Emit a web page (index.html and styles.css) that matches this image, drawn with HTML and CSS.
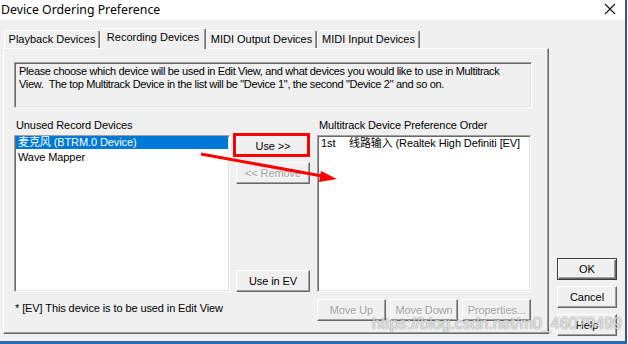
FILE: index.html
```html
<!DOCTYPE html>
<html lang="en">
<head>
  <meta charset="UTF-8">
  <title>Device Ordering Preference</title>
  <link rel="stylesheet" href="styles.css">
</head>
<body>
<div class="window">
  <header class="titlebar">
    <span class="title">Device Ordering Preference</span>
    <svg class="close" width="12" height="12" viewBox="0 0 12 12">
      <path d="M1 1 L11 11 M11 1 L1 11" stroke="#111" stroke-width="1.1" fill="none"/>
    </svg>
  </header>
  <div class="client">
    <div class="sheet">
      <nav class="tabs">
        <div class="tab tab-playback">Playback Devices</div>
        <div class="tab tab-recording active">Recording Devices</div>
        <div class="tab tab-midi-out">MIDI Output Devices</div>
        <div class="tab tab-midi-in">MIDI Input Devices</div>
      </nav>
      <section class="panel">
        <p class="info">Please choose which device will be used in Edit View, and what devices you would like to use in Multitrack View.&nbsp; The top Multitrack Device in the list will be "Device 1", the second "Device 2" and so on.</p>
        <div class="lists">
          <div class="label">Unused Record Devices</div>
          <div></div>
          <div class="label">Multitrack Device Preference Order</div>

          <ul class="listbox">
            <li class="selected">麦克风 (BTRM.0 Device)</li>
            <li>Wave Mapper</li>
          </ul>
          <div class="mid-buttons">
            <button class="btn">Use &gt;&gt;</button>
            <button class="btn disabled">&lt;&lt; Remove</button>
            <button class="btn btn-ev">Use in EV</button>
          </div>
          <ul class="listbox">
            <li><span class="order">1st</span>线路输入 (Realtek High Definiti [EV]</li>
          </ul>

          <div class="note">* [EV] This device is to be used in Edit View</div>
          <div></div>
          <div class="order-buttons">
            <button class="btn disabled">Move Up</button>
            <button class="btn disabled">Move Down</button>
            <button class="btn disabled">Properties...</button>
          </div>
        </div>
      </section>
    </div>
    <aside class="actions">
      <button class="btn default">OK</button>
      <button class="btn">Cancel</button>
      <button class="btn">Help</button>
    </aside>
  </div>
</div>

<!-- annotation drawn on top of the screenshot -->
<svg class="annotation" width="628" height="344" viewBox="0 0 628 344">
  <rect x="234.5" y="134.5" width="74" height="21" fill="none" stroke="#f00" stroke-width="3"/>
  <line x1="201" y1="154" x2="322" y2="176" stroke="#f00" stroke-width="3"/>
  <polygon points="337,179 321,171 319,182" fill="#f00"/>
</svg>
<div class="watermark">https://blog.csdn.net/m0_46079499</div>
</body>
</html>
```

FILE: styles.css
```css
body {
  margin: 0;
  width: 628px;
  height: 344px;
  overflow: hidden;
  background: #fff;
  font-family: "Liberation Sans", Arial, "Noto Sans CJK SC", sans-serif;
  font-size: 11px;
  color: #000;
}

.window {
  box-sizing: border-box;
  width: 627px;
  height: 344px;
  background: #f0f0f0;
  border-right: 2px solid #3b5878;
  border-bottom: 3px solid #2a6cb3;
}

.titlebar {
  display: flex;
  align-items: center;
  justify-content: space-between;
  height: 20px;
  background: #fff;
  padding: 0 9px 0 1px;
}

.titlebar .title {
  font-family: "Noto Sans", "Liberation Sans", sans-serif;
  font-size: 12.3px;
  line-height: 18px;
}

.close {
  display: block;
  margin-top: -3px;
}

.client {
  display: flex;
  height: 321px;
}

.sheet {
  padding: 8px 0 7px 3px;
}

.tabs {
  display: flex;
  align-items: flex-end;
  height: 20px;
  margin-left: 1px;
}

.tab {
  box-sizing: border-box;
  height: 18px;
  line-height: 17px;
  text-align: center;
  border-top: 1px solid #fff;
  border-left: 1px solid #fff;
  border-right: 1px solid #696969;
  box-shadow: inset -1px 0 #a0a0a0;
  border-radius: 2px 2px 0 0;
}

.tab.active {
  height: 21px;
  line-height: 17px;
  margin-bottom: -1px;
  background: #f0f0f0;
  position: relative;
  z-index: 1;
}

.tab-playback { width: 96px; }
.tab-recording { width: 106px; }
.tab-midi-out { width: 111px; }
.tab-midi-in { width: 103px; }

.panel {
  box-sizing: border-box;
  width: 546px;
  height: 286px;
  padding: 13px 16px 0 10px;
  border: 1px solid;
  border-color: #fff #696969 #696969 #fff;
  box-shadow: inset -1px -1px #a0a0a0;
  letter-spacing: -0.1px;
}

.info {
  box-sizing: border-box;
  height: 46px;
  margin: 0;
  padding: 2px 4px;
  line-height: 13px;
  letter-spacing: -0.34px;
  border: 1px solid;
  border-color: #a0a0a0 #fff #fff #a0a0a0;
  box-shadow: inset 1px 1px #696969, inset -1px -1px #e3e3e3;
}

.lists {
  display: grid;
  grid-template-columns: 216px 74px 215px;
  grid-template-rows: 17px 157px 22px;
  column-gap: 6px;
  margin-top: 10px;
}

.lists > :nth-child(3n) {
  margin-left: 1px;
}

.label {
  padding-left: 2px;
  line-height: 14px;
}

.listbox {
  box-sizing: border-box;
  margin: 0;
  padding: 0 1px;
  list-style: none;
  background: #fff;
  border: 1px solid;
  border-color: #a0a0a0 #fff #fff #a0a0a0;
  box-shadow: inset 1px 1px #696969, inset -1px -1px #e3e3e3;
  line-height: 14px;
}

.listbox li {
  padding-left: 2px;
  white-space: nowrap;
}

.listbox li.selected {
  background: #0078d7;
  color: #fff;
  line-height: 13px;
  margin-bottom: 1px;
}

.order {
  display: inline-block;
  width: 28px;
}

.mid-buttons {
  display: flex;
  flex-direction: column;
  gap: 5px;
}

.mid-buttons .btn-ev {
  margin-top: auto;
}

.note {
  padding-left: 1px;
  padding-top: 2px;
  margin-top: 7px;
  line-height: 14px;
}

.order-buttons {
  display: flex;
  gap: 4px;
  margin-top: 7px;
}

.order-buttons .btn {
  flex: 1;
}

.btn {
  box-sizing: border-box;
  height: 22px;
  padding: 0;
  font: inherit;
  letter-spacing: inherit;
  color: #000;
  background: #f0f0f0;
  border: 1px solid;
  border-color: #fff #696969 #696969 #fff;
  box-shadow: inset -1px -1px #a0a0a0;
}

.btn.disabled {
  color: #a0a0a0;
  text-shadow: 1px 1px #fff;
}

.actions {
  display: flex;
  flex-direction: column;
  justify-content: flex-end;
  gap: 6px;
  padding: 0 0 5px 8px;
}

.actions .btn {
  width: 60px;
}

.actions .btn.default {
  border-color: #3c3c3c;
  box-shadow: inset 1px 1px #fff, inset -1px -1px #696969, inset -2px -2px #a0a0a0;
}

.annotation {
  position: absolute;
  left: 0;
  top: 0;
  pointer-events: none;
}

.watermark {
  position: absolute;
  left: 372px;
  top: 315px;
  font-size: 16px;
  line-height: 18px;
  color: rgba(255, 255, 255, 0.75);
  text-shadow: 0 0 1px rgba(0, 0, 0, 0.45), 0 0 2px rgba(0, 0, 0, 0.15);
  pointer-events: none;
}
```
